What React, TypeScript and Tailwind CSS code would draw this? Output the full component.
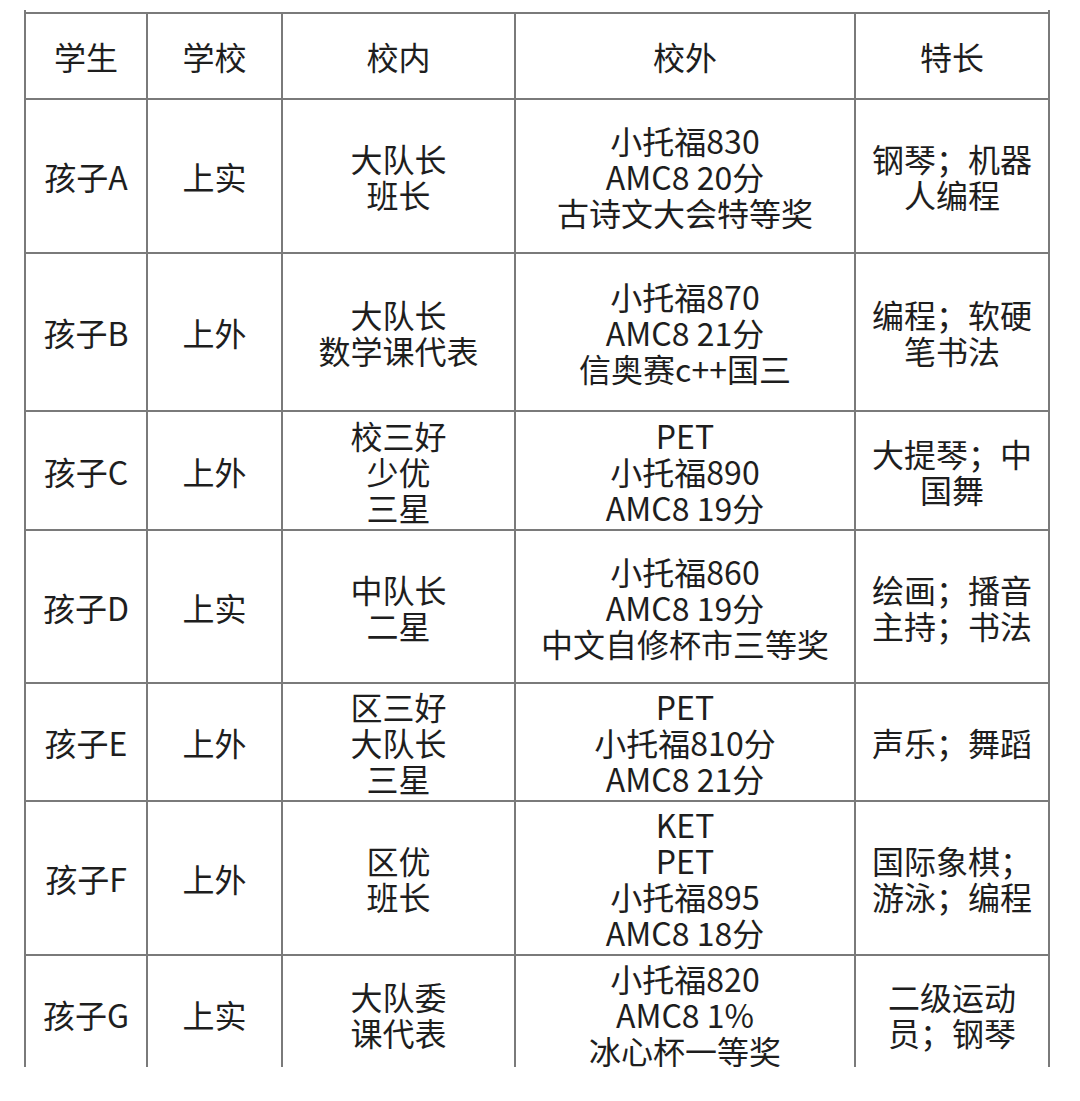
const rows = [
  { name: '孩子A', school: '上实', inner: ['大队长', '班长'], outer: ['小托福830', 'AMC8 20分', '古诗文大会特等奖'], talent: ['钢琴；机器', '人编程'], h: 'h-[154px]' },
  { name: '孩子B', school: '上外', inner: ['大队长', '数学课代表'], outer: ['小托福870', 'AMC8 21分', '信奥赛c++国三'], talent: ['编程；软硬', '笔书法'], h: 'h-[158px]' },
  { name: '孩子C', school: '上外', inner: ['校三好', '少优', '三星'], outer: ['PET', '小托福890', 'AMC8 19分'], talent: ['大提琴；中', '国舞'], h: 'h-[119px]' },
  { name: '孩子D', school: '上实', inner: ['中队长', '二星'], outer: ['小托福860', 'AMC8 19分', '中文自修杯市三等奖'], talent: ['绘画；播音', '主持；书法'], h: 'h-[153px]' },
  { name: '孩子E', school: '上外', inner: ['区三好', '大队长', '三星'], outer: ['PET', '小托福810分', 'AMC8 21分'], talent: ['声乐；舞蹈'], h: 'h-[118px]' },
  { name: '孩子F', school: '上外', inner: ['区优', '班长'], outer: ['KET', 'PET', '小托福895', 'AMC8 18分'], talent: ['国际象棋；', '游泳；编程'], h: 'h-[154px]' },
  { name: '孩子G', school: '上实', inner: ['大队委', '课代表'], outer: ['小托福820', 'AMC8 1%', '冰心杯一等奖'], talent: ['二级运动', '员；钢琴'], h: 'h-[118px]' },
];

const cell = 'border-2 border-[#7a7a7a] text-center align-middle p-0 first:border-l-0 last:border-r-0';

function Lines({ items }: { items: string[] }) {
  return (
    <>
      {items.map((t) => (
        <div key={t}>{t}</div>
      ))}
    </>
  );
}

// 学生情况对比表
export default function App() {
  return (
    <div
      className="bg-white h-[1101px] w-[1080px] pt-[10px] pl-[24px] text-[#1e1e1e] text-[32px] leading-[36px]"
      style={{ fontFamily: '"Noto Sans CJK SC", "Noto Sans", sans-serif' }}
    >
      <div className="w-[1026px] h-[1057px] overflow-hidden border-x-2 border-[#7a7a7a] pt-[2px]">
        <table className="w-[1022px] table-fixed border-collapse">
          <colgroup>
            <col className="w-[121px]" />
            <col className="w-[135px]" />
            <col className="w-[233px]" />
            <col className="w-[340px]" />
            <col className="w-[193px]" />
          </colgroup>
          <thead>
            <tr className="h-[86px]">
              {['学生', '学校', '校内', '校外', '特长'].map((h) => (
                <th key={h} className={`${cell} font-normal border-b-2`}>
                  {h}
                </th>
              ))}
            </tr>
          </thead>
          <tbody>
            {rows.map((r) => (
              <tr key={r.name} className={r.h}>
                <td className={cell}>{r.name}</td>
                <td className={cell}>{r.school}</td>
                <td className={cell}>
                  <Lines items={r.inner} />
                </td>
                <td className={cell}>
                  <Lines items={r.outer} />
                </td>
                <td className={cell}>
                  <Lines items={r.talent} />
                </td>
              </tr>
            ))}
          </tbody>
        </table>
      </div>
    </div>
  );
}
